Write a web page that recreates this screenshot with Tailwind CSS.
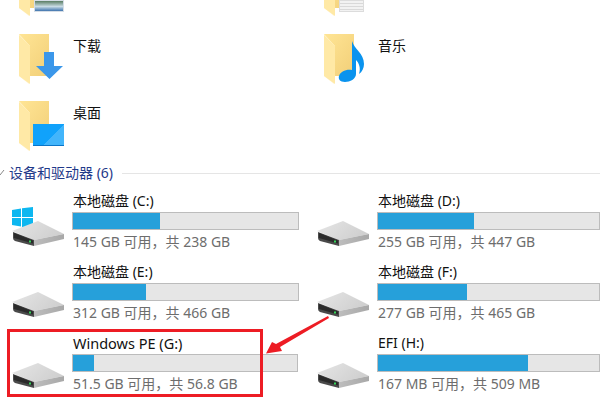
<!DOCTYPE html>
<html lang="zh-CN">
<head>
    <meta charset="UTF-8">
    <title>此电脑</title>
    <script src="https://cdn.jsdelivr.net/npm/@tailwindcss/browser@4"></script>
</head>
<body class="bg-white overflow-hidden">
    <svg width="0" height="0" class="absolute">
        <defs>
            <linearGradient id="folderBack" x1="0" y1="0" x2="1" y2="1"><stop offset="0" stop-color="#ffe595"/><stop offset="1" stop-color="#f2cf78"/></linearGradient>
            <linearGradient id="driveTop" x1="0" y1="0" x2="1" y2="0.4"><stop offset="0" stop-color="#e6e6e6"/><stop offset="1" stop-color="#d0d0d0"/></linearGradient>
            <linearGradient id="driveSide" x1="0" y1="0" x2="1" y2="0"><stop offset="0" stop-color="#bdbdbd"/><stop offset="1" stop-color="#a8a8a8"/></linearGradient>
            <symbol id="folder" viewBox="0 0 46 50">
                <path d="M0 0H30V42H10V50L0 42Z" fill="#fff6d8"/>
                <path d="M0 0H30V42H11V12Z" fill="url(#folderBack)"/>
                <path d="M0 1L11 12V50L0 42Z" fill="#ffe9a6"/>
            </symbol>
            <symbol id="drive" viewBox="0 0 52 25">
                <path d="M0 10L26 0L52 13L22 19Z" fill="url(#driveTop)"/>
                <path d="M22 19L52 13V18L22 25Z" fill="url(#driveSide)"/>
                <path d="M1 11L22 19V25L3 20Q1 19 1 17Z" fill="#4a4a4a"/>
                <path d="M2 12L21 19.500V22.500L2 17Z" fill="#2a2a2a"/>
                <rect x="17" y="19.500" width="2" height="2" fill="#35d35a"/>
            </symbol>
        </defs>
    </svg>

    <div class="relative w-[600px] h-[400px] overflow-hidden font-['Noto_Sans','Noto_Sans_CJK_SC',sans-serif] text-[14px] leading-[18px] text-[#111]">
        <!-- folders -->
        <div class="grid grid-cols-[305px_1fr] pl-[19px] h-[16px] overflow-hidden">
            <div class="relative h-[16px]">
                <svg class="absolute left-0 bottom-0 w-[30px] h-[16px]" viewBox="0 34 46 16" preserveAspectRatio="xMinYMax slice"><use href="#folder" width="46" height="50"/></svg>
                <div class="absolute left-[15px] bottom-[4px] w-[30px] h-[12px] bg-[linear-gradient(#5a7d62,#c8dbe4_55%,#3f74ae)] border border-[#d5dde6]"></div>
            </div>
            <div class="relative h-[16px]">
                <svg class="absolute left-0 bottom-0 w-[30px] h-[16px]" viewBox="0 34 46 16" preserveAspectRatio="xMinYMax slice"><use href="#folder" width="46" height="50"/></svg>
                <div class="absolute left-[15px] bottom-[4px] w-[25px] h-[12px] bg-[repeating-linear-gradient(#f2f2f2_0,#f2f2f2_2px,#d9d9d9_2px,#d9d9d9_3px)] border border-[#dcdcdc]"></div>
            </div>
        </div>

        <div class="grid grid-cols-[305px_1fr] pl-[19px] mt-[18px] h-[67px]">
            <div class="flex gap-[14px]">
                <div class="relative w-[40px] h-[50px]">
                    <svg class="w-[46px] h-[50px]"><use href="#folder"/></svg>
                    <svg class="absolute left-[17px] top-[18px] w-[27px] h-[27px]" viewBox="0 0 27 27"><path d="M8 0H18V14H27L13.500 27L0 14H8Z" fill="#3b97ea"/></svg>
                </div>
                <span class="mt-[3px]">下载</span>
            </div>
            <div class="flex gap-[14px]">
                <div class="relative w-[40px] h-[50px]">
                    <svg class="w-[46px] h-[50px]"><use href="#folder"/></svg>
                    <svg class="absolute left-[14px] top-[7px] w-[26px] h-[42px]" viewBox="0 0 26 42"><path d="M14 0C16 8 26 12 26 23C26 27 24 31 21 33C23 27 21 22 18 19V33C18 38 12 41 7 41C2 41 0 38 1 35C2 31 8 28 14 29Z" fill="#0a93ee"/></svg>
                </div>
                <span class="mt-[3px]">音乐</span>
            </div>
        </div>

        <div class="pl-[19px] h-[61px]">
            <div class="flex gap-[14px]">
                <div class="relative w-[40px] h-[50px]">
                    <svg class="w-[46px] h-[50px]"><use href="#folder"/></svg>
                    <div class="absolute left-[14px] top-[23px] w-[31px] h-[22px] bg-[linear-gradient(135deg,#10a2fb_60%,#42b5fb_60%)] border-b border-[#0a75c8]"></div>
                </div>
                <span class="mt-[3px]">桌面</span>
            </div>
        </div>

        <!-- section header -->
        <div class="flex items-center h-[22px] text-[#1f3a8a]">
            <svg class="w-[6px] h-[8px] mr-[3px]" viewBox="0 0 6 8"><path d="M0 6L4 1" stroke="#888" fill="none"/></svg>
            <span class="text-[14px]">设备和驱动器 (6)</span>
            <div class="ml-[9px] flex-1 h-px bg-[#e5e5e5]"></div>
        </div>

        <!-- drives -->
        <div class="grid grid-cols-[305px_295px] auto-rows-[71px] mt-[8px]">
            <div class="flex">
                <div class="relative w-[72px] shrink-0">
                    <svg class="absolute left-[12px] top-[15px] w-[21px] h-[22px]" viewBox="0 0 21 22"><path d="M0 3L9 1.500V10H0ZM10 1.300L21 0V10H10ZM0 11H9V19.500L0 18ZM10 11H21V22L10 20Z" fill="#0db7f0"/></svg>
                    <svg class="absolute left-[12px] top-[29px] w-[52px] h-[25px]"><use href="#drive"/></svg>
                </div>
                <div class="w-[227px]">
                    <div class="pl-px h-[20px]">本地磁盘 (C:)</div>
                    <div class="h-[18px] bg-[#e6e6e6] border border-[#bcbcbc]"><div class="h-full w-[87px] bg-[#26a0da]"></div></div>
                    <div class="pl-px mt-[3px] text-[#6d6d6d]">145 GB 可用，共 238 GB</div>
                </div>
            </div>
            <div class="flex">
                <div class="relative w-[72px] shrink-0">
                    <svg class="absolute left-[12px] top-[29px] w-[52px] h-[25px]"><use href="#drive"/></svg>
                </div>
                <div class="w-[223px]">
                    <div class="pl-px h-[20px]">本地磁盘 (D:)</div>
                    <div class="h-[18px] bg-[#e6e6e6] border border-[#bcbcbc]"><div class="h-full w-[96px] bg-[#26a0da]"></div></div>
                    <div class="pl-px mt-[3px] text-[#6d6d6d]">255 GB 可用，共 447 GB</div>
                </div>
            </div>
            <div class="flex">
                <div class="relative w-[72px] shrink-0">
                    <svg class="absolute left-[12px] top-[29px] w-[52px] h-[25px]"><use href="#drive"/></svg>
                </div>
                <div class="w-[227px]">
                    <div class="pl-px h-[20px]">本地磁盘 (E:)</div>
                    <div class="h-[18px] bg-[#e6e6e6] border border-[#bcbcbc]"><div class="h-full w-[73px] bg-[#26a0da]"></div></div>
                    <div class="pl-px mt-[3px] text-[#6d6d6d]">312 GB 可用，共 466 GB</div>
                </div>
            </div>
            <div class="flex">
                <div class="relative w-[72px] shrink-0">
                    <svg class="absolute left-[12px] top-[29px] w-[52px] h-[25px]"><use href="#drive"/></svg>
                </div>
                <div class="w-[223px]">
                    <div class="pl-px h-[20px]">本地磁盘 (F:)</div>
                    <div class="h-[18px] bg-[#e6e6e6] border border-[#bcbcbc]"><div class="h-full w-[89px] bg-[#26a0da]"></div></div>
                    <div class="pl-px mt-[3px] text-[#6d6d6d]">277 GB 可用，共 465 GB</div>
                </div>
            </div>
            <div class="flex">
                <div class="relative w-[72px] shrink-0">
                    <svg class="absolute left-[12px] top-[29px] w-[52px] h-[25px]"><use href="#drive"/></svg>
                </div>
                <div class="w-[226px]">
                    <div class="pl-px h-[20px] text-[14.5px]">Windows PE (G:)</div>
                    <div class="h-[18px] bg-[#e6e6e6] border border-[#bcbcbc]"><div class="h-full w-[21px] bg-[#26a0da]"></div></div>
                    <div class="pl-px mt-[3px] text-[#6d6d6d]">51.5 GB 可用，共 56.8 GB</div>
                </div>
            </div>
            <div class="flex">
                <div class="relative w-[72px] shrink-0">
                    <svg class="absolute left-[12px] top-[29px] w-[52px] h-[25px]"><use href="#drive"/></svg>
                </div>
                <div class="w-[223px]">
                    <div class="pl-px h-[20px]">EFI (H:)</div>
                    <div class="h-[18px] bg-[#e6e6e6] border border-[#bcbcbc]"><div class="h-full w-[150px] bg-[#26a0da]"></div></div>
                    <div class="pl-px mt-[3px] text-[#6d6d6d]">167 MB 可用，共 509 MB</div>
                </div>
            </div>
        </div>

        <!-- annotation -->
        <div class="absolute left-[7px] top-[329px] w-[256px] h-[68px] border-[3px] border-[#ed1c24]"></div>
        <svg class="absolute left-[260px] top-[310px] w-[75px] h-[50px]" viewBox="0 0 75 50"><path d="M68 6L69 8L20 37L22 41L6 43.500L12 32L16 34Z" fill="#ed1c24"/></svg>
    </div>
</body>
</html>
